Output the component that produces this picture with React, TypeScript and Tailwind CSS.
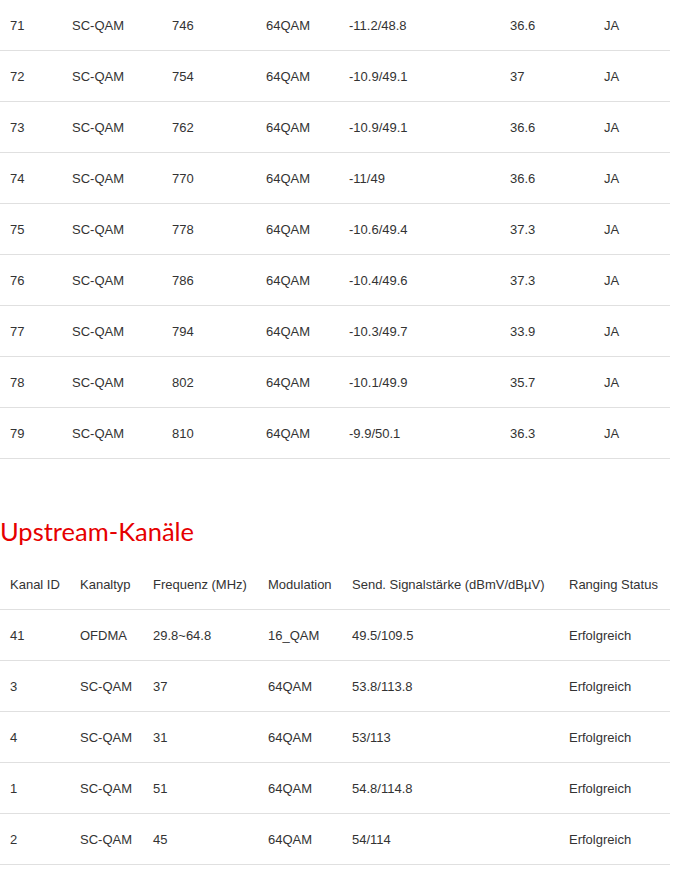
import React from "react"

const downRows = [
  ["71", "SC-QAM", "746", "64QAM", "-11.2/48.8", "36.6", "JA"],
  ["72", "SC-QAM", "754", "64QAM", "-10.9/49.1", "37", "JA"],
  ["73", "SC-QAM", "762", "64QAM", "-10.9/49.1", "36.6", "JA"],
  ["74", "SC-QAM", "770", "64QAM", "-11/49", "36.6", "JA"],
  ["75", "SC-QAM", "778", "64QAM", "-10.6/49.4", "37.3", "JA"],
  ["76", "SC-QAM", "786", "64QAM", "-10.4/49.6", "37.3", "JA"],
  ["77", "SC-QAM", "794", "64QAM", "-10.3/49.7", "33.9", "JA"],
  ["78", "SC-QAM", "802", "64QAM", "-10.1/49.9", "35.7", "JA"],
  ["79", "SC-QAM", "810", "64QAM", "-9.9/50.1", "36.3", "JA"],
]
const downWidths = [62, 100, 94, 83, 161, 94, 76]

const upHead = ["Kanal ID", "Kanaltyp", "Frequenz (MHz)", "Modulation", "Send. Signalstärke (dBmV/dBµV)", "Ranging Status"]
const upRows = [
  ["41", "OFDMA", "29.8~64.8", "16_QAM", "49.5/109.5", "Erfolgreich"],
  ["3", "SC-QAM", "37", "64QAM", "53.8/113.8", "Erfolgreich"],
  ["4", "SC-QAM", "31", "64QAM", "53/113", "Erfolgreich"],
  ["1", "SC-QAM", "51", "64QAM", "54.8/114.8", "Erfolgreich"],
  ["2", "SC-QAM", "45", "64QAM", "54/114", "Erfolgreich"],
]
const upWidths = [70, 73, 115, 84, 217, 111]

function Table({ widths, head, rows }: { widths: number[]; head?: string[]; rows: string[][] }) {
  return (
    <table className="w-[670px] table-fixed border-separate border-spacing-0 text-left text-[13px] text-[#333]">
      <colgroup>
        {widths.map((w, i) => (
          <col key={i} style={{ width: w }} />
        ))}
      </colgroup>
      {head && (
        <thead>
          <tr>
            {head.map((h, i) => (
              <th key={i} className="h-[51px] p-0 pt-px pl-[10px] border-b border-[#e0e0e0] font-normal whitespace-nowrap">{h}</th>
            ))}
          </tr>
        </thead>
      )}
      <tbody>
        {rows.map((r, idx) => (
          <tr key={idx}>
            {r.map((c, i) => (
              <td key={i} className="h-[51px] p-0 pt-px pl-[10px] border-b border-[#e0e0e0] whitespace-nowrap">{c}</td>
            ))}
          </tr>
        ))}
      </tbody>
    </table>
  )
}

export default function App() {
  return (
    <div className="bg-white min-h-[876px] font-['Liberation_Sans',Arial,sans-serif]">
      {/* Downstream (tail) */}
      <Table widths={downWidths} rows={downRows} />

      {/* Upstream */}
      <h2 className="mt-[52px] mb-[8px] h-[40px] leading-[40px] text-[25.5px] text-[#e60000] font-['Lato',sans-serif]">
        Upstream-Kanäle
      </h2>
      <Table widths={upWidths} head={upHead} rows={upRows} />
    </div>
  )
}
